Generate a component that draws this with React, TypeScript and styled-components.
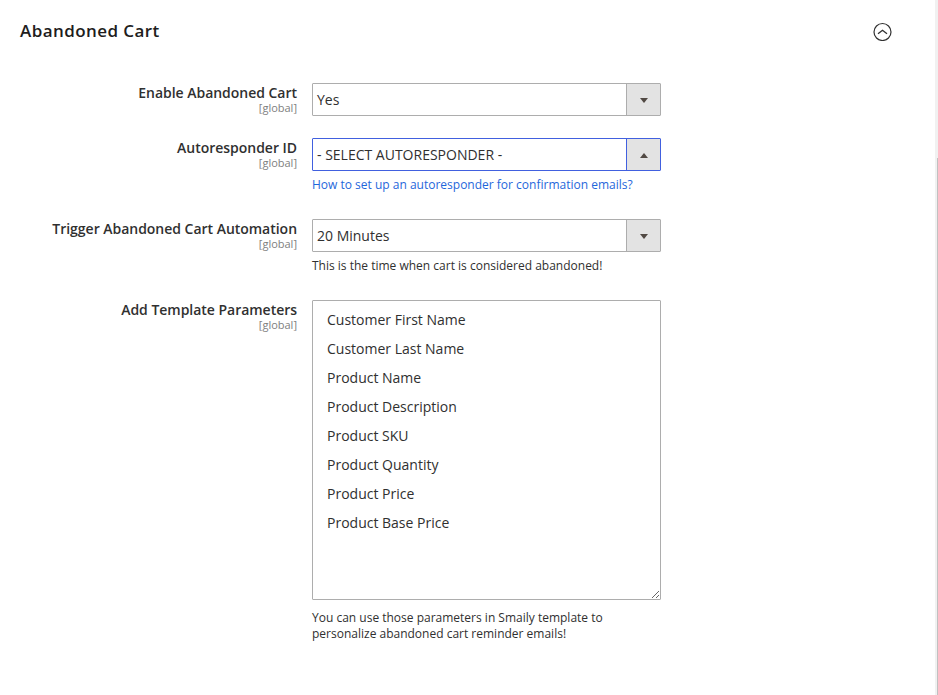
import React from "react";
import styled, { createGlobalStyle } from "styled-components";

const GlobalStyle = createGlobalStyle`
  * { box-sizing: border-box; }
  body { margin: 0; background: #fff; color: #303030; font-family: "Open Sans", sans-serif; overflow: hidden; }
`;

const Page = styled.main`
  display: grid;
  grid-template-columns: minmax(0, 1fr) 3px;
  height: 695px;
`;

const Section = styled.section`
  padding: 20px 43px 0 20px;
`;

const Header = styled.header`
  display: flex;
  justify-content: space-between;
  align-items: flex-start;
  height: 24px;
  margin-bottom: 39px;
`;

const Title = styled.h1`
  margin: -1px 0 0;
  font-size: 17px;
  line-height: 24px;
  font-weight: 600;
  letter-spacing: 0.43px;
  color: #211c1c;
`;

const Toggle = styled.button`
  display: flex;
  margin-top: 2px;
  padding: 0;
  border: 0;
  background: none;
`;

const Row = styled.div<{ $height: number }>`
  display: grid;
  grid-template-columns: 277px 349px;
  column-gap: 15px;
  height: ${(p) => p.$height}px;
  align-items: start;
`;

const Label = styled.label`
  display: flex;
  flex-direction: column;
  align-items: flex-end;
  font-size: 14px;
  line-height: 19px;
  font-weight: 600;
  letter-spacing: -0.025px;
  white-space: nowrap;
`;

const Scope = styled.span`
  font-size: 11px;
  line-height: 12px;
  font-weight: 400;
  letter-spacing: 0;
  color: #808080;
`;

const Field = styled.div`
  display: flex;
  flex-direction: column;
`;

const Select = styled.div<{ $active?: boolean }>`
  display: grid;
  grid-template-columns: 1fr 34px;
  height: 33px;
  border: 1px solid ${(p) => (p.$active ? "#4160df" : "#adadad")};
  border-radius: 1px;
  font-size: 14px;
  line-height: 31px;
`;

const Value = styled.span`
  padding-left: 4px;
`;

const Arrow = styled.span<{ $active?: boolean }>`
  display: flex;
  align-items: center;
  justify-content: center;
  padding: 2px 0 0 1px;
  background: #e3e3e3;
  border-left: 1px solid ${(p) => (p.$active ? "#4160df" : "#adadad")};
`;

const Note = styled.p<{ $gap?: number }>`
  margin: ${(p) => p.$gap ?? 6}px 0 0;
  font-size: 12px;
  line-height: 16px;
`;

const NoteLink = styled.a`
  color: #1f67db;
`;

const List = styled.ul`
  display: flex;
  flex-direction: column;
  margin: 0;
  padding: 4px 14px;
  height: 300px;
  border: 1px solid #adadad;
  border-radius: 1px;
  list-style: none;
  resize: vertical;
  overflow: auto;
  font-size: 14px;
  line-height: 19px;
`;

const Option = styled.li`
  padding: 5px 0;
`;

const Track = styled.div`
  padding: 158px 0 0 2px;
  background: #f1f1f1;
`;

const Thumb = styled.div`
  height: 537px;
  background: #c1c1c1;
`;

const parameters = [
  "Customer First Name",
  "Customer Last Name",
  "Product Name",
  "Product Description",
  "Product SKU",
  "Product Quantity",
  "Product Price",
  "Product Base Price",
];

function ScopedLabel({ children }: { children: React.ReactNode }) {
  return (
    <Label>
      {children}
      <Scope>[global]</Scope>
    </Label>
  );
}

function Dropdown({ value, active }: { value: string; active?: boolean }) {
  return (
    <Select $active={active}>
      <Value>{value}</Value>
      <Arrow $active={active}>
        <svg width="8" height="5" viewBox="0 0 8 5" fill="#514943">
          <path d={active ? "M0 5L4 0L8 5Z" : "M0 0H8L4 5Z"} />
        </svg>
      </Arrow>
    </Select>
  );
}

export default function App() {
  return (
    <>
      <GlobalStyle />
      <Page>
        <Section>
          <Header>
            <Title>Abandoned Cart</Title>
            <Toggle aria-label="Collapse section">
              <svg width="19" height="19" viewBox="0 0 19 19" fill="none" stroke="#303030">
                <circle cx="9.5" cy="10" r="8.5" strokeWidth="1.2" />
                <path d="M5 11.7L9.5 8.2L14 11.7" strokeWidth="1.3" />
              </svg>
            </Toggle>
          </Header>
          <Row $height={55}>
            <ScopedLabel>Enable Abandoned Cart</ScopedLabel>
            <Dropdown value="Yes" />
          </Row>
          <Row $height={81}>
            <ScopedLabel>Autoresponder ID</ScopedLabel>
            <Field>
              <Dropdown value="- SELECT AUTORESPONDER -" active />
              <Note><NoteLink>How to set up an autoresponder for confirmation emails?</NoteLink></Note>
            </Field>
          </Row>
          <Row $height={81}>
            <ScopedLabel>Trigger Abandoned Cart Automation</ScopedLabel>
            <Field>
              <Dropdown value="20 Minutes" />
              <Note>This is the time when cart is considered abandoned!</Note>
            </Field>
          </Row>
          <Row $height={345}>
            <ScopedLabel>Add Template Parameters</ScopedLabel>
            <Field>
              <List>
                {parameters.map((name) => <Option key={name}>{name}</Option>)}
              </List>
              <Note $gap={10}>You can use those parameters in Smaily template to personalize abandoned cart reminder emails!</Note>
            </Field>
          </Row>
        </Section>
        <Track><Thumb /></Track>
      </Page>
    </>
  );
}
